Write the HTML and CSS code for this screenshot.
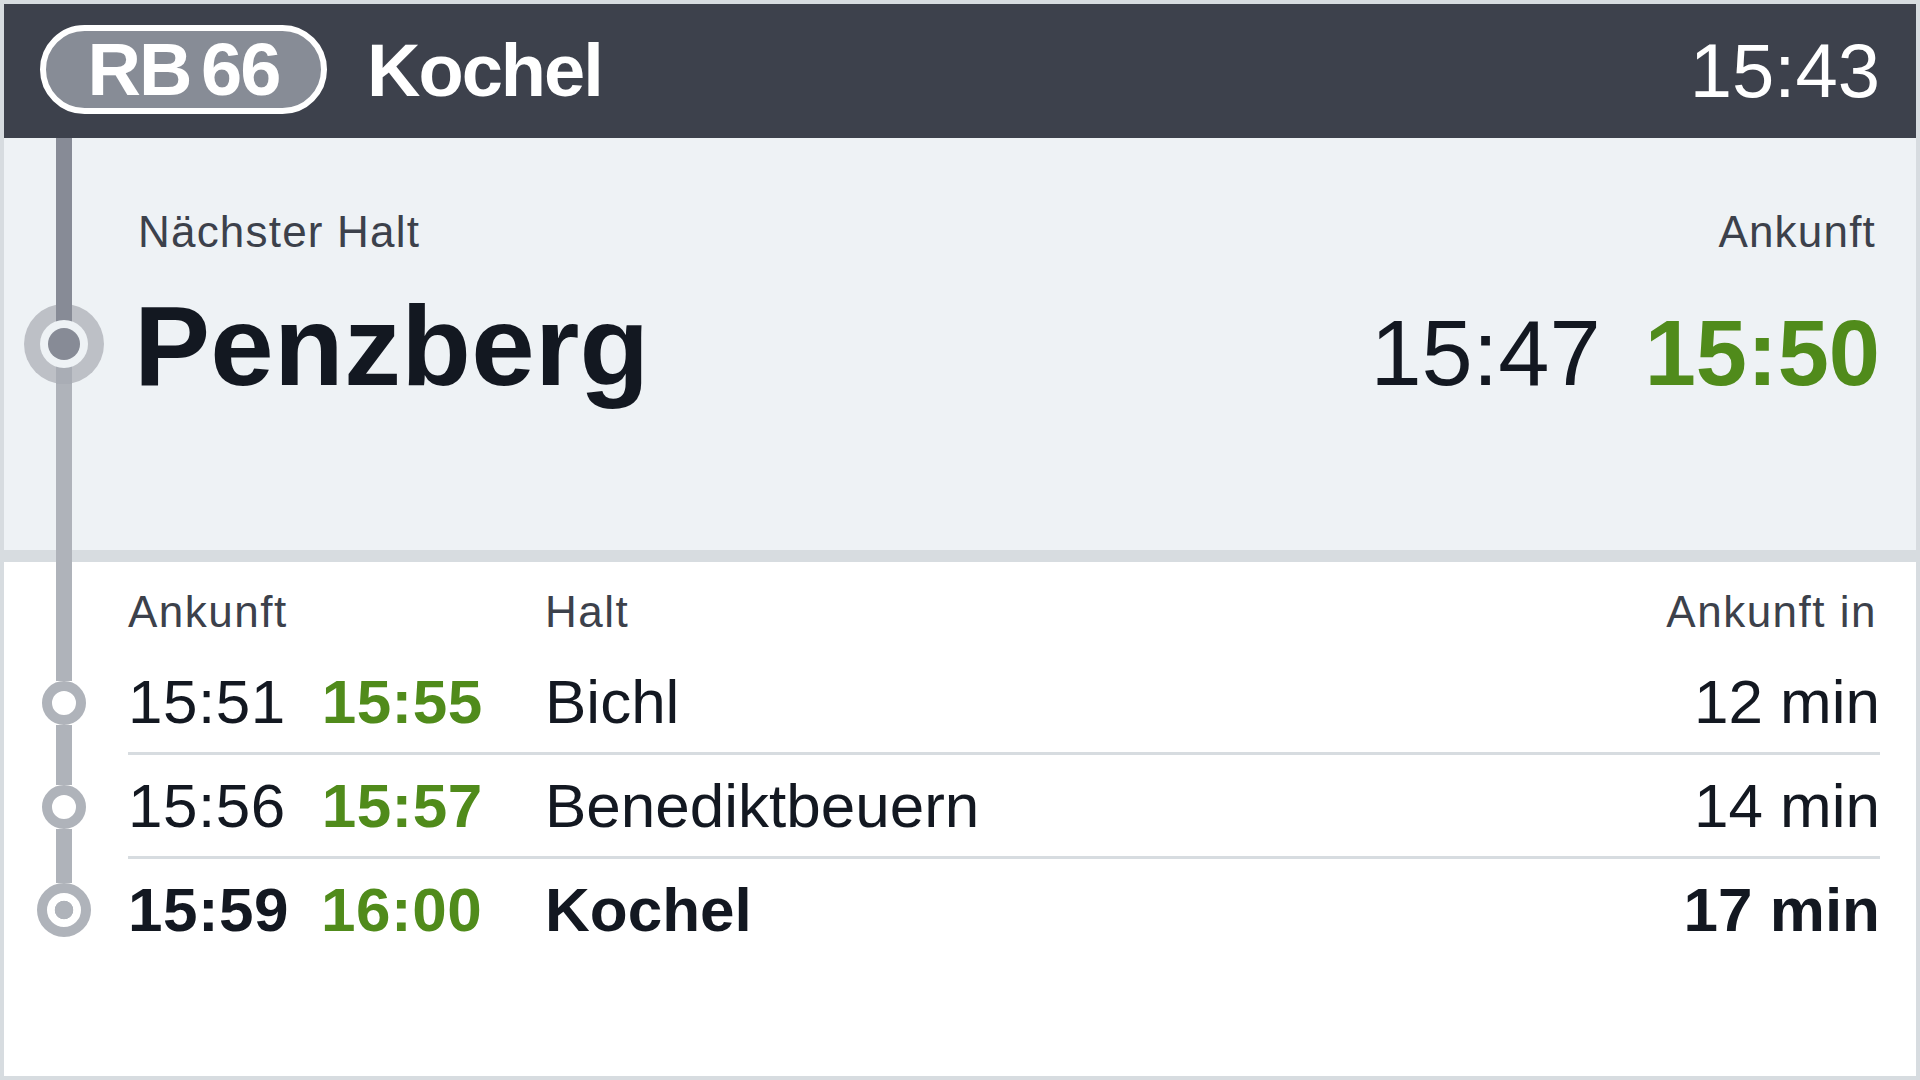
FILE: index.html
```html
<!DOCTYPE html>
<html lang="de">
<head>
<meta charset="utf-8">
<title>RB 66 Kochel</title>
<link rel="stylesheet" href="styles.css">
</head>
<body>
<div class="screen">
  <header class="topbar">
    <div class="line-badge">RB 66</div>
    <div class="dest">Kochel</div>
    <div class="clock">15:43</div>
  </header>

  <section class="next">
    <div class="rail">
      <span class="seg seg-dark"></span>
      <svg class="dot-big" viewBox="0 0 80 80" width="80" height="80" aria-hidden="true">
        <circle cx="40" cy="40" r="40" fill="#bdc0c6"/>
        <rect x="32" y="0" width="16" height="40" fill="#878b96"/>
        <rect x="32" y="40" width="16" height="40" fill="#a9adb5"/>
        <circle cx="40" cy="40" r="24" fill="#eef2f5"/>
        <circle cx="40" cy="40" r="16" fill="#878b96"/>
      </svg>
      <span class="seg seg-light"></span>
    </div>
    <div class="next-body">
      <div class="next-labels">
        <span>Nächster Halt</span>
        <span>Ankunft</span>
      </div>
      <div class="next-main">
        <span class="next-name">Penzberg</span>
        <span class="next-times">
          <span class="t-plan">15:47</span>
          <span class="t-real">15:50</span>
        </span>
      </div>
    </div>
  </section>

  <div class="divider">
    <div class="rail"><span class="seg seg-light"></span></div>
    <div class="divider-fill"></div>
  </div>

  <section class="stops">
    <div class="stop-row stop-head">
      <div class="rail"><span class="seg seg-light"></span></div>
      <div class="stop-cells">
        <span class="c-time">Ankunft</span>
        <span class="c-name">Halt</span>
        <span class="c-in">Ankunft in</span>
      </div>
    </div>

    <div class="stop-row stop">
      <div class="rail">
        <span class="seg seg-light"></span>
        <span class="ring"></span>
        <span class="seg seg-light"></span>
      </div>
      <div class="stop-cells sep">
        <span class="c-time"><span class="t-plan">15:51</span><span class="t-real">15:55</span></span>
        <span class="c-name">Bichl</span>
        <span class="c-in">12 min</span>
      </div>
    </div>

    <div class="stop-row stop">
      <div class="rail">
        <span class="seg seg-light"></span>
        <span class="ring"></span>
        <span class="seg seg-light"></span>
      </div>
      <div class="stop-cells sep">
        <span class="c-time"><span class="t-plan">15:56</span><span class="t-real">15:57</span></span>
        <span class="c-name">Benediktbeuern</span>
        <span class="c-in">14 min</span>
      </div>
    </div>

    <div class="stop-row stop stop-final">
      <div class="rail">
        <span class="seg seg-light"></span>
        <span class="ring ring-final"></span>
        <span class="seg seg-none"></span>
      </div>
      <div class="stop-cells">
        <span class="c-time"><span class="t-plan">15:59</span><span class="t-real">16:00</span></span>
        <span class="c-name">Kochel</span>
        <span class="c-in">17 min</span>
      </div>
    </div>
  </section>
</div>
</body>
</html>
```
FILE: styles.css
```css
* { box-sizing: border-box; }

html, body {
  margin: 0;
  padding: 0;
  background: #d7dce0;
}

body {
  font-family: "Liberation Sans", Arial, sans-serif;
  color: #131821;
}

.screen {
  width: 1920px;
  height: 1080px;
  border: 4px solid #d7dce0;
  display: flex;
  flex-direction: column;
  background: #ffffff;
  overflow: hidden;
}

/* ---------- top bar ---------- */
.topbar {
  height: 134px;
  flex: 0 0 134px;
  background: #3d414c;
  display: flex;
  align-items: center;
  padding: 0 36px;
  color: #ffffff;
}

.line-badge {
  width: 287px;
  height: 89px;
  margin-bottom: 4px;
  border: 6px solid #ffffff;
  border-radius: 45px;
  background: #878c96;
  display: flex;
  align-items: center;
  justify-content: center;
  font-weight: 700;
  font-size: 74px;
  letter-spacing: -2px;
  word-spacing: -8px;
  line-height: 1;
  padding-top: 2px;
}

.dest {
  margin-left: 40px;
  font-weight: 700;
  font-size: 74px;
  letter-spacing: -2px;
  line-height: 1;
}

.clock {
  margin-left: auto;
  font-size: 76px;
  line-height: 1;
}

/* ---------- rail ---------- */
.rail {
  width: 124px;
  flex: 0 0 124px;
  padding-right: 4px;
  display: flex;
  flex-direction: column;
  align-items: center;
}

.seg {
  width: 16px;
  flex: 1 1 0;
}
.seg-dark { background: #878b96; }
.seg-light { background: #afb3ba; }
.seg-none { background: transparent; }

.dot-big {
  display: block;
  flex: 0 0 80px;
}

.ring {
  flex: 0 0 44px;
  width: 44px;
  height: 44px;
  border-radius: 50%;
  border: 10px solid #afb3ba;
  background: #ffffff;
}

.ring-final {
  flex: 0 0 54px;
  width: 54px;
  height: 54px;
  background: radial-gradient(circle, #afb3ba 9px, #ffffff 9.6px);
}

/* ---------- next stop ---------- */
.next {
  height: 412px;
  flex: 0 0 412px;
  background: #eef2f5;
  display: flex;
}

.next-body {
  flex: 1;
  padding: 67px 36px 0 10px;
}

.next-labels {
  display: flex;
  justify-content: space-between;
  padding-right: 4px;
  font-size: 44px;
  line-height: 53px;
  letter-spacing: 1.2px;
  color: #3c414b;
}

.next-main {
  margin-top: 31px;
  display: flex;
  justify-content: space-between;
  align-items: baseline;
}

.next-name {
  font-size: 114px;
  line-height: 114px;
  font-weight: 700;
  letter-spacing: 0.3px;
  margin-left: -4px;
  color: #131821;
}

.next-times {
  display: flex;
  gap: 44px;
  font-size: 92px;
  line-height: 92px;
}

.t-plan { color: #131821; }
.t-real { color: #508b1b; font-weight: 700; }

/* ---------- divider ---------- */
.divider {
  height: 12px;
  flex: 0 0 12px;
  display: flex;
  background: #d7dce0;
}
.divider-fill { flex: 1; }

/* ---------- stops ---------- */
.stops {
  flex: 1;
  background: #ffffff;
  display: flex;
  flex-direction: column;
}

.stop-row {
  display: flex;
}

.stop-cells {
  flex: 1;
  margin-right: 36px;
  display: grid;
  grid-template-columns: 417px 1fr auto;
  align-items: baseline;
}

.stop-head .stop-cells {
  padding: 23px 0 13px;
  font-size: 44px;
  line-height: 53px;
  letter-spacing: 1.5px;
  color: #3c414b;
}

.stop-head .c-in { padding-right: 3px; }

.stop .stop-cells {
  font-size: 62px;
  line-height: 101px;
}

.stop .c-time {
  display: flex;
  gap: 36px;
  letter-spacing: 0.5px;
}

.stop-cells.sep {
  border-bottom: 3px solid #d7dce0;
}

.c-in { text-align: right; }

.stop-final .stop-cells {
  font-weight: 700;
}
.stop-final .c-time { gap: 32px; }
```
